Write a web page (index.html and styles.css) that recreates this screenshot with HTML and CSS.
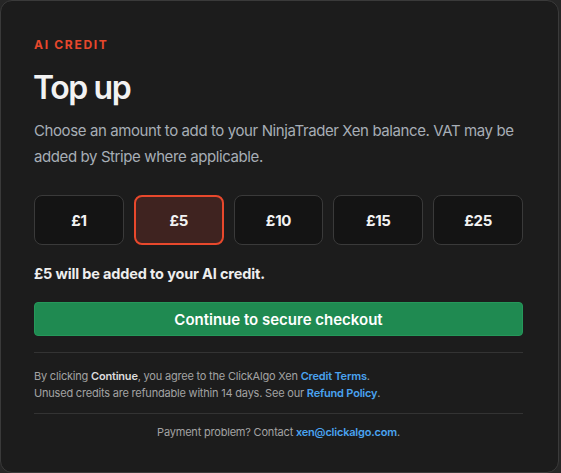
FILE: index.html
```html
<!DOCTYPE html>
<html lang="en">
<head>
<meta charset="utf-8">
<title>Top up</title>
<link rel="stylesheet" href="styles.css">
</head>
<body>
<main class="card">
  <div class="eyebrow">AI CREDIT</div>
  <h1 class="title">Top up</h1>
  <p class="lead">Choose an amount to add to your NinjaTrader Xen balance. VAT may be added by Stripe where applicable.</p>
  <div class="amounts">
    <button class="amount">£1</button>
    <button class="amount selected">£5</button>
    <button class="amount">£10</button>
    <button class="amount">£15</button>
    <button class="amount">£25</button>
  </div>
  <p class="summary">£5 will be added to your AI credit.</p>
  <button class="checkout">Continue to secure checkout</button>
  <div class="terms">
    <p>By clicking <strong>Continue</strong>, you agree to the ClickAlgo Xen <a href="#">Credit Terms</a>.</p>
    <p>Unused credits are refundable within 14 days. See our <a href="#">Refund Policy</a>.</p>
  </div>
  <p class="help">Payment problem? Contact <a href="#">xen@clickalgo.com</a>.</p>
</main>
</body>
</html>
```
FILE: styles.css
```css
html, body {
  margin: 0;
  padding: 0;
  background: #262626;
}
body {
  font-family: Inter, "Noto Sans", sans-serif;
  color: #eeeeee;
}
.card {
  box-sizing: border-box;
  width: 559px;
  height: 473px;
  background: #1c1c1c;
  border: 1px solid #3a3a3a;
  border-radius: 12px;
  padding: 36px 35px 0 33px;
}
.eyebrow {
  color: #e8482c;
  font-size: 12px;
  font-weight: 700;
  letter-spacing: 1.7px;
  line-height: 16px;
}
.title {
  margin: 15px 0 0 -1px;
  font-size: 32px;
  font-weight: 600;
  letter-spacing: -1.4px;
  line-height: 40px;
  color: #f2f2f2;
}
.lead {
  margin: 10px 0 0;
  font-size: 15px;
  line-height: 26px;
  color: #a7aeb6;
  letter-spacing: -0.4px;
}
.amounts {
  margin-top: 25px;
  display: grid;
  grid-template-columns: repeat(5, 1fr);
  gap: 10px;
}
.amount {
  height: 50px;
  background: #141414;
  border: 1px solid #3a3a3a;
  border-radius: 8px;
  color: #f2f2f2;
  font-family: inherit;
  font-size: 15px;
  font-weight: 700;
  letter-spacing: -0.3px;
}
.amount.selected {
  background: #3f2320;
  border: 2px solid #e8482c;
}
.summary {
  margin: 19px 0 0;
  font-size: 14.5px;
  font-weight: 700;
  line-height: 20px;
  color: #eeeeee;
  letter-spacing: -0.15px;
}
.checkout {
  display: block;
  width: 100%;
  margin-top: 18px;
  height: 34px;
  background: #1f8a51;
  border: 1px solid #25985a;
  border-radius: 4px;
  color: #ffffff;
  font-family: inherit;
  font-size: 15px;
  font-weight: 600;
}
.terms {
  margin-top: 16px;
  border-top: 1px solid #333333;
  border-bottom: 1px solid #333333;
  padding: 15px 0 11px;
}
.terms p {
  margin: 0;
  font-size: 11px;
  line-height: 17px;
  color: #a3a3a3;
  letter-spacing: -0.2px;
}
.terms strong {
  color: #dddddd;
  font-weight: 600;
}
a {
  color: #4aa3f0;
  font-weight: 600;
  text-decoration: none;
}
.help {
  margin: 10px 0 0;
  text-align: center;
  font-size: 11px;
  line-height: 17px;
  color: #a3a3a3;
  letter-spacing: -0.2px;
}
```
